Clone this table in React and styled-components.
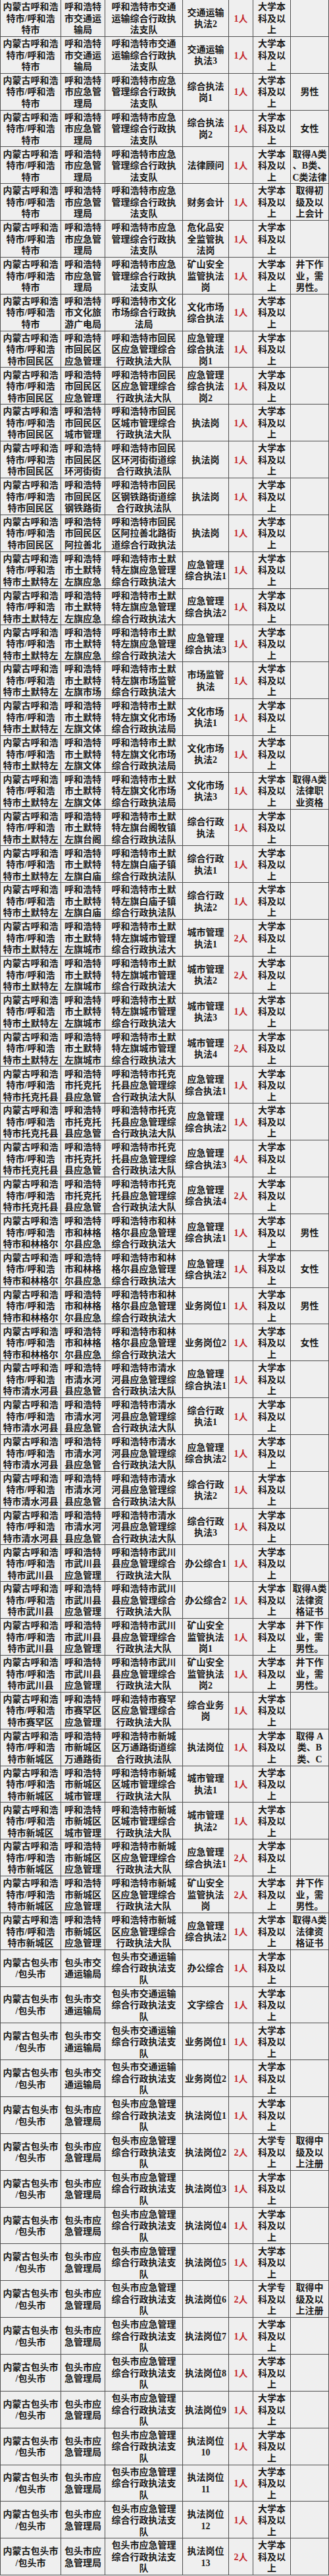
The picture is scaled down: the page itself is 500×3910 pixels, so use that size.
import React from 'react';
import styled, { createGlobalStyle } from 'styled-components';

const GlobalStyle = createGlobalStyle`
  html, body {
    margin: 0;
    padding: 0;
    background: #efefef;
  }
  body {
    font-family: "Liberation Serif", "Noto Sans CJK SC", serif;
  }
`;

const Sheet = styled.div`
  width: 499px;
  border-left: 1px solid #505050;
  display: grid;
  grid-template-columns: 92px 67px 118px 70px 37px 57px 58px;
  grid-auto-rows: calc(3910px / 70);
  background: #efefef;
`;

const Cell = styled.div`
  box-sizing: border-box;
  display: flex;
  align-items: center;
  justify-content: center;
  min-width: 0;
  padding: 2px ${(p) => p.$pad}px 0;
  border-right: 1px solid #505050;
  border-bottom: 1px solid #505050;
  overflow: hidden;
  text-align: center;
  font-size: 14px;
  line-height: 17.5px;
  font-weight: 700;
  color: ${(p) => (p.$red ? '#c3272c' : '#1b1b1b')};
  line-break: ${(p) => (p.$loose ? 'anywhere' : 'auto')};
`;

const Clip = styled.div`
  width: 100%;
  max-height: 52.5px;
  overflow: hidden;
`;

const columns = [
  { pad: 3, loose: true },
  { pad: 2, loose: true },
  { pad: 5, loose: true },
  { pad: 2 },
  { pad: 0, red: true },
  { pad: 2, loose: true },
  { pad: 2, loose: true },
];

const BK = '大学本科及以上';
const ZK = '大学专科及以上';
const hh = (s = '') => `内蒙古呼和浩特市/呼和浩特市${s}`;
const MALE_MINE = '井下作业，需男性。';
const LAW_A = '取得A类法律资格证书';

const group = (region, dept, unit, posts) =>
  posts.map(([post, count = '1人', note = '', edu = BK]) => [region, dept, unit, post, count, edu, note]);

const rows = [
  ...group(hh(), '呼和浩特市交通运输局', '呼和浩特市交通运输综合行政执法支队', [
    ['交通运输执法2'],
    ['交通运输执法3'],
  ]),
  ...group(hh(), '呼和浩特市应急管理局', '呼和浩特市应急管理综合行政执法支队', [
    ['综合执法岗1', '1人', '男性'],
    ['综合执法岗2', '1人', '女性'],
    ['法律顾问', '1人', '取得A类、B类、C类法律职业资格'],
    ['财务会计', '1人', '取得初级及以上会计专业技术资格'],
    ['危化品安全监管执法岗'],
    ['矿山安全监管执法岗', '1人', MALE_MINE],
  ]),
  ...group(hh(), '呼和浩特市文化旅游广电局', '呼和浩特市文化市场综合行政执法局', [
    ['文化市场综合执法'],
  ]),
  ...group(hh('回民区'), '呼和浩特市回民区应急管理局', '呼和浩特市回民区应急管理综合行政执法大队', [
    ['应急管理综合执法岗1'],
    ['应急管理综合执法岗2'],
  ]),
  ...group(hh('回民区'), '呼和浩特市回民区城市管理综合行政执法局', '呼和浩特市回民区城市管理综合行政执法大队', [
    ['执法岗'],
  ]),
  ...group(hh('回民区'), '呼和浩特市回民区环河街街道办事处', '呼和浩特市回民区环河街街道综合行政执法队', [
    ['执法岗'],
  ]),
  ...group(hh('回民区'), '呼和浩特市回民区钢铁路街道办事处', '呼和浩特市回民区钢铁路街道综合行政执法队', [
    ['执法岗'],
  ]),
  ...group(hh('回民区'), '呼和浩特市回民区阿拉善北路街道办事处', '呼和浩特市回民区阿拉善北路街道综合行政执法队', [
    ['执法岗'],
  ]),
  ...group(hh('土默特左旗'), '呼和浩特市土默特左旗应急管理局', '呼和浩特市土默特左旗应急管理综合行政执法大队', [
    ['应急管理综合执法1'],
    ['应急管理综合执法2'],
    ['应急管理综合执法3'],
  ]),
  ...group(hh('土默特左旗'), '呼和浩特市土默特左旗市场监督管理局', '呼和浩特市土默特左旗市场监管综合行政执法大队', [
    ['市场监管执法'],
  ]),
  ...group(hh('土默特左旗'), '呼和浩特市土默特左旗文体旅游广电局', '呼和浩特市土默特左旗文化市场综合行政执法局', [
    ['文化市场执法1'],
    ['文化市场执法2'],
    ['文化市场执法3', '1人', '取得A类法律职业资格'],
  ]),
  ...group(hh('土默特左旗'), '呼和浩特市土默特左旗台阁牧镇人民政府', '呼和浩特市土默特左旗台阁牧镇综合行政执法队', [
    ['综合行政执法'],
  ]),
  ...group(hh('土默特左旗'), '呼和浩特市土默特左旗白庙子镇人民政府', '呼和浩特市土默特左旗白庙子镇综合行政执法队', [
    ['综合行政执法1'],
    ['综合行政执法2'],
  ]),
  ...group(hh('土默特左旗'), '呼和浩特市土默特左旗城市管理综合行政执法局', '呼和浩特市土默特左旗城市管理综合行政执法大队', [
    ['城市管理执法1', '2人'],
    ['城市管理执法2', '2人'],
    ['城市管理执法3', '1人'],
    ['城市管理执法4', '2人'],
  ]),
  ...group(hh('托克托县'), '呼和浩特市托克托县应急管理局', '呼和浩特市托克托县应急管理综合行政执法大队', [
    ['应急管理综合执法1'],
    ['应急管理综合执法2'],
    ['应急管理综合执法3', '4人'],
    ['应急管理综合执法4', '2人'],
  ]),
  ...group(hh('和林格尔县'), '呼和浩特市和林格尔县应急管理局', '呼和浩特市和林格尔县应急管理综合行政执法大队', [
    ['应急管理综合执法1', '1人', '男性'],
    ['应急管理综合执法2', '1人', '女性'],
    ['业务岗位1', '1人', '男性'],
    ['业务岗位2', '1人', '女性'],
  ]),
  ...group(hh('清水河县'), '呼和浩特市清水河县应急管理局', '呼和浩特市清水河县应急管理综合行政执法大队', [
    ['应急管理综合执法1'],
    ['综合行政执法1'],
    ['应急管理综合执法2'],
    ['综合行政执法2'],
    ['综合行政执法3'],
  ]),
  ...group(hh('武川县'), '呼和浩特市武川县应急管理局', '呼和浩特市武川县应急管理综合行政执法大队', [
    ['办公综合1'],
    ['办公综合2', '1人', LAW_A],
    ['矿山安全监管执法岗1', '1人', MALE_MINE],
    ['矿山安全监管执法岗2', '1人', MALE_MINE],
  ]),
  ...group(hh('赛罕区'), '呼和浩特市赛罕区应急管理局', '呼和浩特市赛罕区应急管理综合行政执法大队', [
    ['综合业务岗'],
  ]),
  ...group(hh('新城区'), '呼和浩特市新城区万通路街道办事处', '呼和浩特市新城区万通路街道综合行政执法队', [
    ['执法岗位', '1人', '取得 A 类、B 类、C 类法律职业资格'],
  ]),
  ...group(hh('新城区'), '呼和浩特市新城区城市管理综合行政执法局', '呼和浩特市新城区城市管理综合行政执法大队', [
    ['城市管理执法1'],
    ['城市管理执法2'],
  ]),
  ...group(hh('新城区'), '呼和浩特市新城区应急管理局', '呼和浩特市新城区应急管理综合行政执法大队', [
    ['应急管理综合执法1', '2人'],
    ['矿山安全监管执法岗', '2人', MALE_MINE],
    ['应急管理综合执法2', '1人', LAW_A],
  ]),
  ...group('内蒙古包头市/包头市', '包头市交通运输局', '包头市交通运输综合行政执法支队', [
    ['办公综合'],
    ['文字综合'],
    ['业务岗位1'],
    ['业务岗位2'],
  ]),
  ...group('内蒙古包头市/包头市', '包头市应急管理局', '包头市应急管理综合行政执法支队', [
    ['执法岗位1'],
    ['执法岗位2', '2人', '取得中级及以上注册安全工程师', ZK],
    ['执法岗位3'],
    ['执法岗位4'],
    ['执法岗位5'],
    ['执法岗位6', '2人', '取得中级及以上注册安全工程师', ZK],
    ['执法岗位7'],
    ['执法岗位8'],
    ['执法岗位9'],
    ['执法岗位10'],
    ['执法岗位11'],
    ['执法岗位12'],
    ['执法岗位13', '2人'],
  ]),
];

export default function App() {
  return (
    <>
      <GlobalStyle />
      <Sheet>
        {rows.map((row, r) =>
          row.map((text, c) => (
            <Cell
              key={`${r}-${c}`}
              $pad={columns[c].pad}
              $red={columns[c].red}
              $loose={columns[c].loose}
            >
              <Clip>{text}</Clip>
            </Cell>
          ))
        )}
      </Sheet>
    </>
  );
}
